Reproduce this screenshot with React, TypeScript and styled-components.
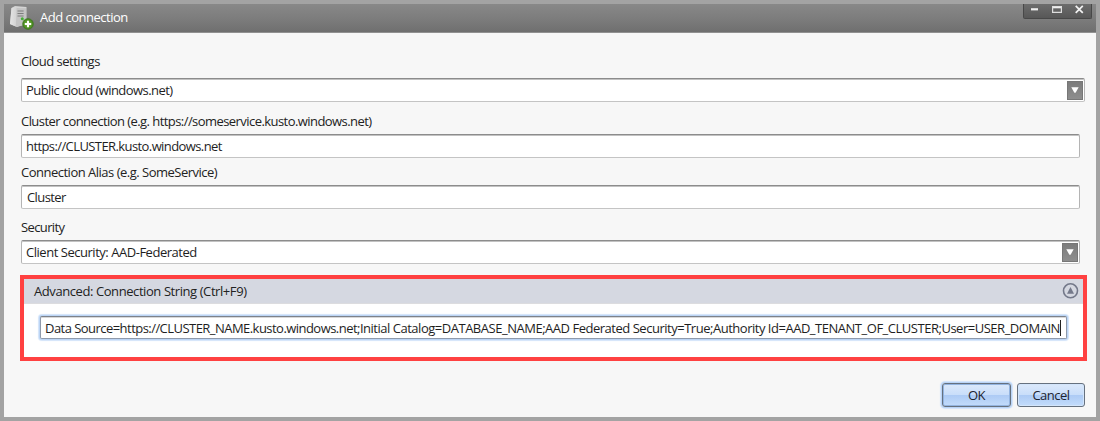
import React from "react";
import styled, { createGlobalStyle, css } from "styled-components";

const GlobalStyle = createGlobalStyle`
  * { box-sizing: border-box; }
  body { margin: 0; background: #a3a3a3; }
`;

const Frame = styled.div`
  width: 1100px;
  height: 421px;
  padding: 4px;
  background: #a3a3a3;
  font-family: "Open Sans", "Noto Sans", sans-serif;
  font-size: 13px;
  line-height: 18px;
  color: #222;
  overflow: hidden;
`;

const Dialog = styled.div`
  display: flex;
  flex-direction: column;
  height: 413px;
  background: #f7f7f7;
`;

const TitleBar = styled.header`
  display: flex;
  align-items: flex-start;
  height: 29px;
  padding: 0 4px 0 0;
  background: linear-gradient(#888 0%, #7d7d7d 50%, #6f6f6f 100%);
  border-bottom: 1px solid #919191;
  color: #fff;
`;

const Title = styled.h1`
  flex: 1;
  margin: 4px 0 0 6px;
  font-size: 13px;
  font-weight: 400;
  line-height: 18px;
`;

const WindowControls = styled.div`
  display: flex;
  width: 69px;
  height: 15px;
  background: linear-gradient(#6c6c6c, #575757);
  border: solid #484848;
  border-width: 0 1px 1px 1px;
  border-radius: 0 0 2px 2px;
`;

const Text = styled.span<{ $tracking?: number }>`
  letter-spacing: ${(p) => p.$tracking ?? -0.5}px;
  white-space: nowrap;
`;

const Body = styled.main`
  display: flex;
  flex-direction: column;
  padding: 19px 0 0 17px;
`;

const Label = styled.label<{ $gap: number }>`
  height: 18px;
  margin-bottom: ${(p) => p.$gap}px;
`;

const fieldBox = css`
  display: flex;
  align-items: center;
  height: 24px;
  background: #fff;
  border: 1px solid #b4b4b4;
  border-top-color: #8c8c8c;
  border-bottom-color: #c4c4c4;
  border-radius: 2px;
  box-shadow: inset 0 1px 0 #c2c2c2;
  color: #1e1e1e;
`;

const Field = styled.div<{ $width: number; $after: number; $indent?: number }>`
  ${fieldBox}
  width: ${(p) => p.$width}px;
  margin-bottom: ${(p) => p.$after}px;
  padding: 0 1px 0 ${(p) => p.$indent ?? 4}px;
`;

const DropButton = styled.button`
  display: flex;
  align-items: center;
  justify-content: center;
  width: 16px;
  height: 19px;
  margin-left: auto;
  padding: 0;
  border: 1px solid #777;
  background: linear-gradient(#7c7c7c, #8e8e8e);
`;

const Advanced = styled.section`
  width: 1067px;
  height: 86px;
  margin-left: -1px;
  border: 4px solid #ff4141;
  background: #fff;
`;

const AdvancedHeader = styled.div`
  display: flex;
  align-items: center;
  justify-content: space-between;
  height: 25px;
  padding: 0 4px 0 10px;
  background: #d5d8e1;
  border-bottom: 1px solid #dcdcdf;
`;

const ConnectionString = styled.div`
  ${fieldBox}
  width: 1027px;
  height: 23px;
  margin: 12px 0 0 16px;
  padding-left: 4px;
  border-color: #8f9aab;
  border-top-color: #7d828b;
  box-shadow: 0 0 0 1px #bcd5f5, 0 0 1px 2px #d3e4fa, inset 0 1px 0 #d8d8d8;
`;

const Caret = styled.i`
  width: 1px;
  height: 16px;
  background: #222;
`;

const Actions = styled.footer`
  display: flex;
  gap: 6px;
  margin: 22px 0 0 921px;
`;

const ActionButton = styled.button<{ $width: number; $focused?: boolean }>`
  width: ${(p) => p.$width}px;
  height: 24px;
  padding: 0;
  font: inherit;
  line-height: 20px;
  color: #1c2430;
  border: 1px solid #66717f;
  border-radius: 3px;
  background: linear-gradient(#dce9fb 0%, #c9defa 48%, #adcbf5 52%, #c3dcfb 100%);
  box-shadow: ${(p) =>
    p.$focused
      ? "inset 0 0 0 1px #93b4e0, 0 0 0 1px #b9d4f7, 0 0 1px 2px #d2e3fa"
      : "inset 0 0 0 1px #d3e5fb"};
`;

const ServerIcon = () => (
  <svg width="30" height="27" viewBox="0 0 30 27" aria-hidden="true">
    <defs>
      <linearGradient id="side" x1="0" x2="1">
        <stop offset="0" stopColor="#e4e4e4" />
        <stop offset="1" stopColor="#d2d2d2" />
      </linearGradient>
      <radialGradient id="plus">
        <stop offset="0" stopColor="#8ac750" />
        <stop offset="1" stopColor="#3d7f18" />
      </radialGradient>
    </defs>
    <path d="M7.5 4 L11 2 L22.5 3 V20 L13 23 L6 20 Z" fill="#d4d4d4" />
    <path d="M7.5 4 L12.6 3 L11.6 22.6 L6 20 Z" fill="url(#side)" />
    <path d="M12.6 4 L22 4.2 V20.5 L11.8 22.8 Z" fill="#c4c4c4" />
    <path d="M13.5 7 L19.6 7 M13.5 9.5 L19.6 9.5 M13.5 12 L19.6 12" stroke="#7d7d7d" strokeWidth="1.1" />
    <circle cx="18.3" cy="14.8" r="1.5" fill="#42ae35" />
    <circle cx="24" cy="20" r="5.4" fill="url(#plus)" stroke="#3c7420" strokeWidth=".6" />
    <path d="M24 16.8 V23.2 M20.8 20 H27.2" stroke="#fff" strokeWidth="2" />
  </svg>
);

const ControlGlyphs = () => (
  <svg width="67" height="14" viewBox="0 0 67 14" aria-hidden="true">
    <path d="M7 5.3 H14" stroke="#eee" strokeWidth="2.2" />
    <path d="M28 3.2 H38" stroke="#eee" strokeWidth="2.2" />
    <path d="M28.6 3 V8.4 H37.4 V3" fill="none" stroke="#ddd" strokeWidth="1.2" />
    <path d="M51.7 1.8 L58.8 8.9 M58.8 1.8 L51.7 8.9" stroke="#f2f2f2" strokeWidth="1.7" />
  </svg>
);

const DownArrow = () => (
  <svg width="8" height="6" viewBox="0 0 8 6" aria-hidden="true">
    <path d="M0.3 0.3 H7.7 L4.6 5.7 H3.4 Z" fill="#fff" />
  </svg>
);

const CollapseIcon = () => (
  <svg width="17" height="17" viewBox="0 0 17 17" aria-hidden="true">
    <circle cx="8.5" cy="7.8" r="7" fill="none" stroke="#74798a" strokeWidth="1.6" />
    <path d="M8.5 4 L12 10.8 H5 Z" fill="#74798a" />
  </svg>
);

export default function App() {
  return (
    <Frame>
      <GlobalStyle />
      <Dialog>
        <TitleBar>
          <ServerIcon />
          <Title><Text>Add connection</Text></Title>
          <WindowControls><ControlGlyphs /></WindowControls>
        </TitleBar>
        <Body>
          <Label $gap={8}><Text>Cloud settings</Text></Label>
          <Field $width={1064} $after={10}>
            <Text $tracking={-0.55}>Public cloud (windows.net)</Text>
            <DropButton aria-label="Choose cloud"><DownArrow /></DropButton>
          </Field>
          <Label $gap={4}>
            <Text $tracking={-0.56}>Cluster connection (e.g. https://someservice.kusto.windows.net)</Text>
          </Label>
          <Field $width={1059} $after={5}>
            <Text $tracking={-0.59}>https://CLUSTER.kusto.windows.net</Text>
          </Field>
          <Label $gap={4}><Text>Connection Alias (e.g. SomeService)</Text></Label>
          <Field $width={1059} $after={9} $indent={5}>
            <Text $tracking={-0.6}>Cluster</Text>
          </Field>
          <Label $gap={4}><Text $tracking={-0.62}>Security</Text></Label>
          <Field $width={1059} $after={11}>
            <Text $tracking={-0.47}>Client Security: AAD-Federated</Text>
            <DropButton aria-label="Choose security"><DownArrow /></DropButton>
          </Field>
          <Advanced>
            <AdvancedHeader>
              <Text $tracking={-0.42}>Advanced: Connection String (Ctrl+F9)</Text>
              <CollapseIcon />
            </AdvancedHeader>
            <ConnectionString>
              <Text $tracking={-0.54}>Data Source=https://CLUSTER_NAME.kusto.windows.net;</Text>
              <Text $tracking={-0.48}>
                Initial Catalog=DATABASE_NAME;AAD Federated Security=True;Authority Id=AAD_TENANT_OF_CLUSTER;User=USER_DOMAIN
              </Text>
              <Caret />
            </ConnectionString>
          </Advanced>
          <Actions>
            <ActionButton $width={69} $focused><Text>OK</Text></ActionButton>
            <ActionButton $width={68}><Text>Cancel</Text></ActionButton>
          </Actions>
        </Body>
      </Dialog>
    </Frame>
  );
}
